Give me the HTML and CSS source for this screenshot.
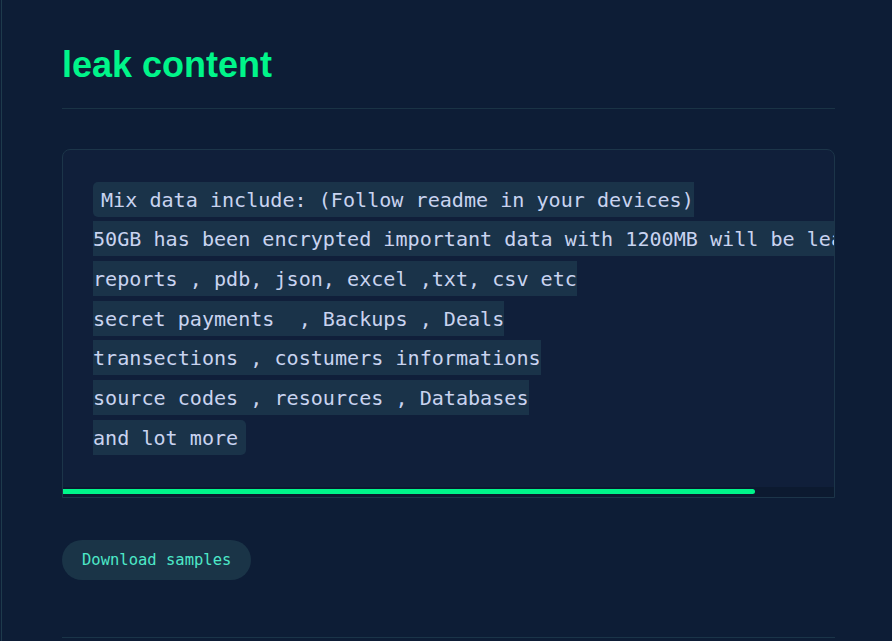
FILE: index.html
```html
<!DOCTYPE html>
<html lang="en">
<head>
<meta charset="utf-8">
<title>leak content</title>
<link rel="stylesheet" href="styles.css">
</head>
<body>
<div class="page">
  <section class="leak">
    <h1 class="leak-title">leak content</h1>
    <div class="leak-box">
<pre class="leak-text"><code class="mark">Mix data include: (Follow readme in your devices)
50GB has been encrypted important data with 1200MB will be leaked 
reports , pdb, json, excel ,txt, csv etc
secret payments  , Backups , Deals
transections , costumers informations
source codes , resources , Databases
and lot more</code></pre>
      <div class="scroll-track"><div class="scroll-thumb" style="width: 89.75%"></div></div>
    </div>
    <a class="btn-download" href="#">Download samples</a>
  </section>
</div>
</body>
</html>
```

FILE: styles.css
```css
html, body {
  margin: 0;
  padding: 0;
  background: #0d1d36;
}

body {
  width: 892px;
  height: 641px;
  overflow: hidden;
  font-family: "Liberation Sans", Arial, sans-serif;
}

.page {
  margin-left: 1px;
  border-left: 1px solid #1e3a4c;
  padding: 0 57px 0 60px;
  min-height: 641px;
  box-sizing: border-box;
}

.leak {
  padding-top: 44px;
  padding-bottom: 57px;
  border-bottom: 1px solid #1a3448;
}

.leak-title {
  margin: 0;
  padding-bottom: 22px;
  border-bottom: 1px solid #1a3345;
  font-family: "Liberation Sans", Arial, sans-serif;
  font-weight: 700;
  font-size: 36px;
  line-height: 42px;
  color: #00f58a;
}

.leak-box {
  margin-top: 40px;
  border: 1px solid #1c3549;
  border-radius: 8px 8px 0 0;
  background: #101f3a;
}

.leak-text {
  margin: 0;
  padding: 30px 30px 29px;
  overflow: hidden;
  font-family: "DejaVu Sans Mono", "Liberation Mono", monospace;
  font-size: 20.1px;
  line-height: 39.67px;
  color: #c9d3f0;
}

.mark {
  font-family: inherit;
  background: #1a3349;
  padding: 5.5px 8px;
  border-radius: 5px;
}

.scroll-track {
  height: 10px;
  padding: 2px 0 3px;
  box-sizing: border-box;
  background: #0c1a30;
}

.scroll-thumb {
  height: 5px;
  background: #00f58a;
  border-radius: 0 3px 3px 0;
}

.btn-download {
  display: inline-block;
  margin-top: 42px;
  height: 40px;
  padding: 0 20px;
  border-radius: 20px;
  background: #1a3447;
  color: #4de8c8;
  font-family: "DejaVu Sans Mono", "Liberation Mono", monospace;
  font-size: 15.5px;
  line-height: 40px;
  text-decoration: none;
  vertical-align: top;
}
```
